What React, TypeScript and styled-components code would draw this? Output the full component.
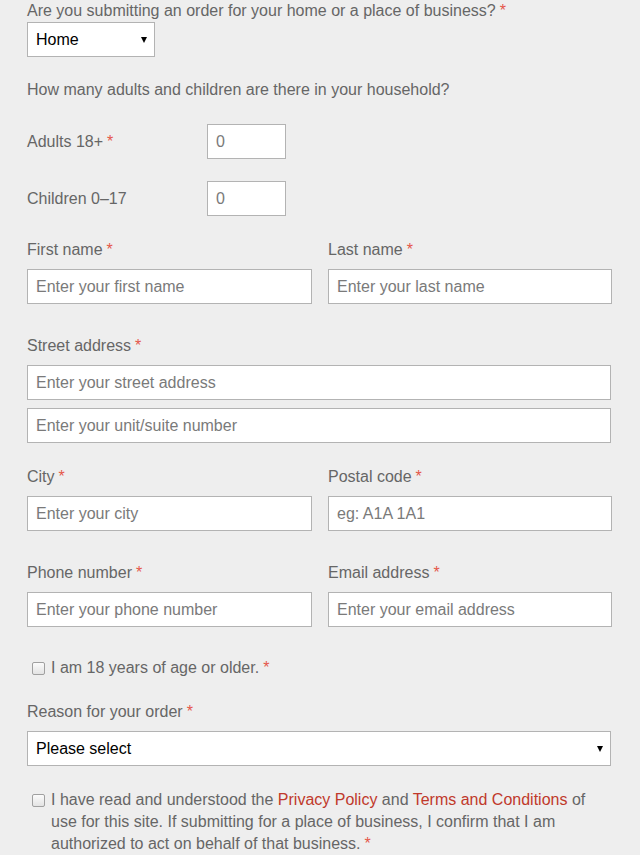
import styled, { createGlobalStyle } from 'styled-components';

const Global = createGlobalStyle`
  html, body {
    margin: 0;
    padding: 0;
    background: #eeeeee;
  }
  body {
    font-family: "Liberation Sans", Arial, sans-serif;
    font-size: 16px;
    color: #666666;
  }
`;

const Form = styled.form`
  padding: 0 29px 0 27px;
`;

const Block = styled.div<{ $mt?: number }>`
  margin-top: ${({ $mt = 0 }) => $mt}px;
`;

const Label = styled.label`
  display: block;
  line-height: 22px;
  color: #666666;
`;

const Req = styled.span`
  color: #e5574a;
  margin-left: 4px;
`;

const Text = styled.p`
  margin: 0;
  line-height: 22px;
`;

const SelectWrap = styled.div<{ $width?: string; $mt?: number }>`
  position: relative;
  width: ${({ $width = '100%' }) => $width};
  margin-top: ${({ $mt = 0 }) => $mt}px;
`;

const Select = styled.select`
  appearance: none;
  -webkit-appearance: none;
  display: block;
  width: 100%;
  height: 35px;
  box-sizing: border-box;
  border: 1px solid #b3b3b3;
  border-radius: 0;
  background: #ffffff;
  padding: 0 24px 0 8px;
  font-family: "Liberation Sans", Arial, sans-serif;
  font-size: 16px;
  color: #000000;
`;

const Caret = styled.span`
  position: absolute;
  right: 8px;
  top: 15px;
  width: 0;
  height: 0;
  border-left: 3px solid transparent;
  border-right: 3px solid transparent;
  border-top: 6px solid #000000;
  pointer-events: none;
`;

const Input = styled.input<{ $mt?: number }>`
  display: block;
  width: 100%;
  height: 35px;
  box-sizing: border-box;
  margin-top: ${({ $mt = 0 }) => $mt}px;
  border: 1px solid #b3b3b3;
  border-radius: 0;
  background: #ffffff;
  padding: 0 8px;
  font-family: "Liberation Sans", Arial, sans-serif;
  font-size: 16px;
  color: #333333;

  &::placeholder {
    color: #7a7a7a;
  }
`;

const CountRow = styled.div<{ $mt?: number }>`
  display: grid;
  grid-template-columns: 180px 79px;
  align-items: center;
  margin-top: ${({ $mt = 0 }) => $mt}px;
`;

const TwoCol = styled.div<{ $mt?: number }>`
  display: grid;
  grid-template-columns: 285px 284px;
  column-gap: 16px;
  margin-top: ${({ $mt = 0 }) => $mt}px;
`;

const Field = styled.div`
  display: flex;
  flex-direction: column;
  gap: 8px;
`;

const CheckRow = styled.label<{ $mt?: number }>`
  display: flex;
  align-items: flex-start;
  gap: 6px;
  padding-left: 5px;
  line-height: 22px;
  margin-top: ${({ $mt = 0 }) => $mt}px;
`;

const Box = styled.input.attrs({ type: 'checkbox' })`
  flex: none;
  width: 13px;
  height: 13px;
  margin: 5px 0 0 0;
  appearance: none;
  -webkit-appearance: none;
  box-sizing: border-box;
  border: 1px solid #a0a0a0;
  border-radius: 2px;
  background: linear-gradient(#fbfbfb, #e3e3e3);
`;

const Link = styled.a`
  color: #c0392b;
  text-decoration: none;
`;

export default function App() {
  return (
    <>
      <Global />
      <Form>
        <Block>
          <Label>
            Are you submitting an order for your home or a place of business?<Req>*</Req>
          </Label>
          <SelectWrap $width="128px">
            <Select defaultValue="home">
              <option value="home">Home</option>
              <option value="business">Business</option>
            </Select>
            <Caret />
          </SelectWrap>
        </Block>

        <Block $mt={22}>
          <Text>How many adults and children are there in your household?</Text>
        </Block>

        <CountRow $mt={23}>
          <Label>
            Adults 18+<Req>*</Req>
          </Label>
          <Input placeholder="0" />
        </CountRow>
        <CountRow $mt={22}>
          <Label>Children 0–17</Label>
          <Input placeholder="0" />
        </CountRow>

        <TwoCol $mt={23}>
          <Field>
            <Label>
              First name<Req>*</Req>
            </Label>
            <Input placeholder="Enter your first name" />
          </Field>
          <Field>
            <Label>
              Last name<Req>*</Req>
            </Label>
            <Input placeholder="Enter your last name" />
          </Field>
        </TwoCol>

        <Block $mt={31}>
          <Field>
            <Label>
              Street address<Req>*</Req>
            </Label>
            <Input placeholder="Enter your street address" />
          </Field>
          <Input $mt={8} placeholder="Enter your unit/suite number" />
        </Block>

        <TwoCol $mt={23}>
          <Field>
            <Label>
              City<Req>*</Req>
            </Label>
            <Input placeholder="Enter your city" />
          </Field>
          <Field>
            <Label>
              Postal code<Req>*</Req>
            </Label>
            <Input placeholder="eg: A1A 1A1" />
          </Field>
        </TwoCol>

        <TwoCol $mt={31}>
          <Field>
            <Label>
              Phone number<Req>*</Req>
            </Label>
            <Input placeholder="Enter your phone number" />
          </Field>
          <Field>
            <Label>
              Email address<Req>*</Req>
            </Label>
            <Input placeholder="Enter your email address" />
          </Field>
        </TwoCol>

        <CheckRow $mt={30}>
          <Box />
          <span>
            I am 18 years of age or older.<Req>*</Req>
          </span>
        </CheckRow>

        <Block $mt={22}>
          <Label>
            Reason for your order<Req>*</Req>
          </Label>
          <SelectWrap $mt={8}>
            <Select defaultValue="">
              <option value="">Please select</option>
            </Select>
            <Caret />
          </SelectWrap>
        </Block>

        <CheckRow $mt={23}>
          <Box />
          <span>
            I have read and understood the <Link href="#">Privacy Policy</Link> and{' '}
            <Link href="#">Terms and Conditions</Link> of use for this site. If submitting for a
            place of business, I confirm that I am authorized to act on behalf of that business.
            <Req>*</Req>
          </span>
        </CheckRow>
      </Form>
    </>
  );
}
